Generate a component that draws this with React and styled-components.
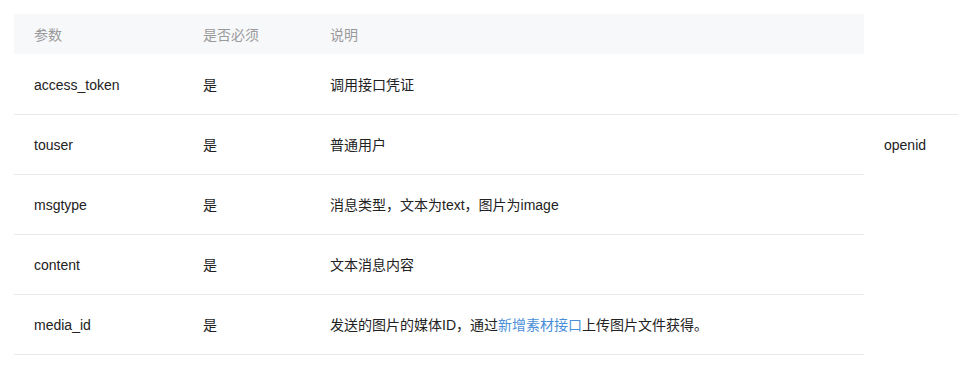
import styled, { createGlobalStyle } from "styled-components";

const GlobalStyle = createGlobalStyle`
  body {
    margin: 0;
    background: #fff;
    font-family: "Liberation Sans", "Noto Sans CJK SC", sans-serif;
  }
`;

const Wrap = styled.div`
  padding: 14px 0 0 14px;
`;

const Table = styled.table`
  border-collapse: collapse;
  border-spacing: 0;
  font-size: 14px;
  color: #222;
  text-align: left;
`;

const HeadCell = styled.th`
  background: #f7f8fa;
  color: #9a9a9a;
  font-weight: normal;
  height: 40px;
  padding: 0 20px;
  width: ${(p) => p.$w}px;
  box-sizing: border-box;
  vertical-align: middle;
`;

const Row = styled.tr`
  &:first-child td {
    padding-top: 21px;
  }
  & + & td {
    border-top: 1px solid #e6e8eb;
  }
  &:last-child td {
    border-bottom: 1px solid #e6e8eb;
  }
`;

const Cell = styled.td`
  padding: 20px 20px 19px;
  line-height: 20px;
  white-space: nowrap;
  vertical-align: middle;
`;

const ExtraCell = styled(Cell)`
  padding-right: 32px;
`;

const Link = styled.a`
  color: #4a90d9;
  text-decoration: none;
`;

const rows = [
  { name: "access_token", req: "是", desc: "调用接口凭证" },
  { name: "touser", req: "是", desc: "普通用户", extra: "openid" },
  { name: "msgtype", req: "是", desc: "消息类型，文本为text，图片为image" },
  { name: "content", req: "是", desc: "文本消息内容" },
  {
    name: "media_id",
    req: "是",
    desc: (
      <>
        发送的图片的媒体ID，通过<Link href="#">新增素材接口</Link>上传图片文件获得。
      </>
    ),
  },
];

const App = () => {
  return (
    <>
      <GlobalStyle />
      <Wrap>
        <Table>
          <thead>
            <tr>
              <HeadCell $w={169}>参数</HeadCell>
              <HeadCell $w={127}>是否必须</HeadCell>
              <HeadCell $w={554}>说明</HeadCell>
            </tr>
          </thead>
          <tbody>
            {rows.map((r) => (
              <Row key={r.name}>
                <Cell>{r.name}</Cell>
                <Cell>{r.req}</Cell>
                <Cell>{r.desc}</Cell>
                {r.extra && <ExtraCell>{r.extra}</ExtraCell>}
              </Row>
            ))}
          </tbody>
        </Table>
      </Wrap>
    </>
  );
};

export default App;
